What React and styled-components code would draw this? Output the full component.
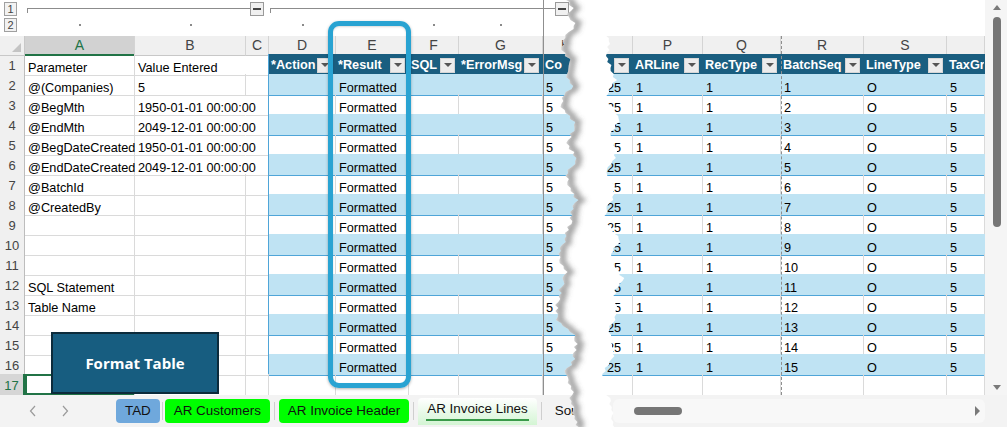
import React from 'react';
import styled, { createGlobalStyle, css } from 'styled-components';

const COLS = '25px 110px 111px 23px 67px 73px 50px 84px 47px 43px 70px 78px 83px 83px 38px';
const HEAD_BG = '#1a5e80';
const BAND = '#bfe3f3';
const LINE = '#4fa5d8';
const GRID = '#dadada';
const GREEN = '#217346';

const GlobalStyle = createGlobalStyle`
  html, body { margin: 0; padding: 0; background: #fff; }
  body { font-family: "Liberation Sans", Arial, sans-serif; overflow: hidden; }
  * { box-sizing: border-box; }
`;

const Screen = styled.div`
  position: relative;
  width: 1007px;
  height: 427px;
  overflow: hidden;
  display: grid;
  grid-template-columns: 985px 22px;
  grid-template-rows: 395px 32px;
  background: #fff;
`;

const Sheet = styled.div`
  overflow: hidden;
  display: flex;
  flex-direction: column;
`;

const Outline = styled.div`
  display: grid;
  grid-template-columns: ${COLS};
  grid-template-rows: 18px 18px;
  height: 36px;
`;

const LevelStack = styled.div`
  grid-row: 1 / span 2;
  grid-column: 1;
  display: flex;
  flex-direction: column;
  gap: 2px;
  padding: 2px 0 0 4px;
`;

const LevelButton = styled.div`
  width: 13px;
  height: 14px;
  border: 1px solid #a0a0a0;
  background: #f2f2f2;
  color: #444;
  font-size: 11px;
  line-height: 12px;
  text-align: center;
`;

const Bracket = styled.div`
  grid-row: 1;
  grid-column: ${p => p.$cols};
  align-self: start;
  margin-top: 8px;
  height: 5px;
  border-top: 1px solid #8c8c8c;
  border-left: 1px solid #8c8c8c;
  margin-left: ${p => p.$ml}px;
  margin-right: ${p => p.$mr}px;
`;

const MinusBox = styled.div`
  grid-row: 1;
  grid-column: ${p => p.$col};
  align-self: start;
  justify-self: start;
  margin-top: 2px;
  margin-left: ${p => p.$ml}px;
  width: 14px;
  height: 14px;
  border: 1px solid #9a9a9a;
  background: #f0f0f0;
  display: flex;
  align-items: center;
  justify-content: center;
  &::after {
    content: '';
    width: 8px;
    height: 2px;
    background: #444;
  }
`;

const Dot = styled.div`
  grid-row: 2;
  grid-column: ${p => p.$col};
  justify-self: center;
  margin-top: 6px;
  width: 2px;
  height: 2px;
  background: #8a8a8a;
`;

const GridRow = styled.div`
  display: grid;
  grid-template-columns: ${COLS};
  height: ${p => p.$h || 20}px;
  flex: none;
`;

const Corner = styled.div`
  position: relative;
  background: #f0f0f0;
  border-right: 1px solid #c8c8c8;
  border-bottom: 1px solid #c8c8c8;
  &::after {
    content: '';
    position: absolute;
    right: 3px;
    bottom: 3px;
    border-left: 9px solid transparent;
    border-bottom: 9px solid #c4c4c4;
  }
`;

const ColHead = styled.div`
  background: #f0f0f0;
  color: #444;
  font-size: 14px;
  line-height: 18px;
  text-align: center;
  border-right: 1px solid #d4d4d4;
  border-bottom: 1px solid #c8c8c8;
  ${p => p.$selected && css`
    background: #d2d2d2;
    color: ${GREEN};
    border-bottom: 2px solid ${GREEN};
  `}
`;

const RowNum = styled.div`
  background: #f0f0f0;
  color: #444;
  font-size: 13px;
  line-height: 19px;
  padding-top: 2px;
  text-align: center;
  border-right: 1px solid #bdbdbd;
  border-bottom: 1px solid #d4d4d4;
  ${p => p.$selected && css`
    background: #d6d6d6;
    color: ${GREEN};
    border-right: 2px solid ${GREEN};
  `}
`;

const Cell = styled.div`
  display: flex;
  align-items: flex-end;
  min-width: 0;
  padding: 0 3px 0;
  font-size: 12.7px;
  line-height: 14px;
  color: #000;
  white-space: nowrap;
  border-right: 1px solid ${GRID};
  border-bottom: 1px solid ${GRID};
  ${p => p.$kind === 'band' && css`
    background: ${BAND};
    border-right-color: ${BAND};
    border-bottom-color: ${LINE};
  `}
  ${p => p.$kind === 'white' && css`
    border-bottom-color: ${LINE};
  `}
  ${p => p.$kind === 'head' && css`
    background: ${HEAD_BG};
    color: #fff;
    font-weight: 700;
    border-right-color: ${HEAD_BG};
    border-bottom-color: ${LINE};
    overflow: hidden;
    align-items: center;
    padding: 1px 2px 0 2px;
  `}
  ${p => p.$right && css`
    justify-content: flex-end;
    padding-right: 11px;
  `}
  ${p => p.$spill && css`border-right-color: transparent;`}
  ${p => p.$edge && css`border-right-color: ${LINE};`}
  ${p => p.$selected && css`box-shadow: inset 0 0 0 2px ${GREEN};`}
`;

const FilterBtn = styled.span`
  flex: none;
  margin-left: auto;
  margin-right: 1px;
  width: 15px;
  height: 15px;
  background: #ececec;
  border: 1px solid #d6d6d6;
  display: flex;
  align-items: center;
  justify-content: center;
  &::after {
    content: '';
    border-left: 4px solid transparent;
    border-right: 4px solid transparent;
    border-top: 4px solid #555;
  }
`;

const VScroll = styled.div`
  grid-column: 2;
  grid-row: 1;
  background: #f5f5f5;
  display: flex;
  flex-direction: column;
  align-items: center;
  padding: 5px 0 5px 2px;
`;

const Arrow = styled.div`
  width: 0;
  height: 0;
  ${p => p.$dir === 'up' && css`
    border-left: 4px solid transparent;
    border-right: 4px solid transparent;
    border-bottom: 5px solid #7a7a7a;
  `}
  ${p => p.$dir === 'down' && css`
    margin-top: auto;
    border-left: 4px solid transparent;
    border-right: 4px solid transparent;
    border-top: 5px solid #7a7a7a;
  `}
  ${p => p.$dir === 'right' && css`
    border-top: 5px solid transparent;
    border-bottom: 5px solid transparent;
    border-left: 5px solid #7a7a7a;
  `}
`;

const VThumb = styled.div`
  margin-top: 7px;
  width: 8px;
  height: 210px;
  border-radius: 4px;
  background: #767676;
`;

const TabBar = styled.div`
  grid-column: 1 / -1;
  grid-row: 2;
  background: #f3f3f3;
  display: flex;
  align-items: center;
`;

const Nav = styled.div`
  width: 116px;
  flex: none;
  display: flex;
  align-items: center;
  gap: 24px;
  padding-left: 29px;
  color: #9a9a9a;
`;

const Tab = styled.div`
  flex: none;
  position: relative;
  height: 24px;
  padding: 0 9px;
  border-radius: 4px;
  font-size: 13.4px;
  line-height: 24px;
  color: #111;
  background: ${p => p.$bg || 'transparent'};
  ${p => p.$active && css`
    height: 27px;
    margin-top: 1px;
    line-height: 22px;
    border-radius: 4px 4px 0 0;
    background: linear-gradient(#ffffff, #d4f5d4);
    &::after {
      content: '';
      position: absolute;
      left: 8px;
      right: 8px;
      bottom: 4px;
      height: 2px;
      background: #3a9a4a;
    }
  `}
`;

const Sep = styled.div`
  flex: none;
  width: 1px;
  height: 18px;
  background: #cfcfcf;
  margin: 0 ${p => p.$m}px;
`;

const HScroll = styled.div`
  margin-left: auto;
  margin-right: 22px;
  width: 396px;
  height: 24px;
  border-radius: 6px;
  background: #f8f8f8;
  display: flex;
  align-items: center;
  padding: 0 5px 0 21px;
`;

const HThumb = styled.div`
  width: 48px;
  height: 8px;
  border-radius: 4px;
  background: #767676;
  margin-right: auto;
`;

const Highlight = styled.div`
  position: absolute;
  left: 328px;
  top: 21px;
  width: 83px;
  height: 367px;
  border: 5px solid #29a3d2;
  border-radius: 11px;
  box-shadow: 0 1px 3px rgba(0, 0, 0, 0.3), inset 0 1px 2px rgba(0, 0, 0, 0.15);
  pointer-events: none;
`;

const FormatButton = styled.div`
  position: absolute;
  left: 51px;
  top: 332px;
  width: 168px;
  height: 62px;
  background: #175d80;
  border: 2px solid #0c2b3b;
  color: #fff;
  font-family: "Open Sans", "Liberation Sans", sans-serif;
  font-weight: 700;
  font-size: 15px;
  display: flex;
  align-items: center;
  justify-content: center;
`;

const PageBreak = styled.div`
  position: absolute;
  left: ${p => p.$x}px;
  top: ${p => p.$top}px;
  height: ${p => 395 - p.$top}px;
  width: 0;
  border-left: 1px ${p => (p.$dashed ? 'dashed' : 'solid')} #8f8f8f;
  pointer-events: none;
`;

const TearSvg = styled.svg`
  position: absolute;
  left: 540px;
  top: 0;
  pointer-events: none;
`;

/* ---------- data ---------- */
const LETTERS = ['', 'A', 'B', 'C', 'D', 'E', 'F', 'G', 'H', '', 'P', 'Q', 'R', 'S', ''];
const LEFT = [
  ['Parameter', 'Value Entered'],
  ['@(Companies)', '5'],
  ['@BegMth', '1950-01-01 00:00:00'],
  ['@EndMth', '2049-12-01 00:00:00'],
  ['@BegDateCreated', '1950-01-01 00:00:00'],
  ['@EndDateCreated', '2049-12-01 00:00:00'],
  ['@BatchId', ''],
  ['@CreatedBy', ''],
  ['', ''],
  ['', ''],
  ['', ''],
  ['SQL Statement', ''],
  ['Table Name', ''],
  ['', ''],
  ['', ''],
  ['', ''],
  ['', ''],
];
const HEADS = [
  ['*Action', true], ['*Result', true], ['SQL', true], ['*ErrorMsg', true], ['Co', true],
  ['', true], ['ARLine', true], ['RecType', true], ['BatchSeq', true], ['LineType', true], ['TaxGroup', false],
];

/* ---------- torn edge drawing ---------- */
const L_KEYS = [[0,566],[8,572],[16,568],[24,575],[32,569],[40,563],[48,562],[56,567],[64,572],[72,565],[80,569],[88,572],[96,563],[104,561],[112,566],[120,572],[128,576],[136,570],[144,568],[152,573],[160,576],[168,570],[176,566],[184,569],[192,572],[200,576],[208,573],[216,570],[224,571],[232,566],[240,564],[248,561],[256,558],[264,562],[272,566],[280,564],[288,560],[296,559],[304,557],[312,556],[320,558],[328,566],[336,574],[344,577],[352,574],[360,575],[368,568],[376,565],[384,570],[392,572],[400,571],[408,573],[416,575],[428,578]];
const R_KEYS = [[0,612],[10,606],[20,610],[30,604],[40,610],[54,607],[60,608],[70,612],[80,616],[90,608],[100,605],[110,615],[120,620],[130,612],[140,610],[150,617],[160,614],[170,605],[180,611],[190,615],[200,612],[210,606],[220,603],[230,612],[240,620],[250,614],[260,609],[270,618],[280,624],[290,616],[300,613],[310,617],[320,614],[330,609],[340,611],[350,614],[360,612],[370,605],[380,600],[390,603],[400,610],[410,612],[428,614]];

function interp(keys, y) {
  for (let i = 0; i < keys.length - 1; i++) {
    const [y0, x0] = keys[i];
    const [y1, x1] = keys[i + 1];
    if (y >= y0 && y <= y1) return x0 + ((x1 - x0) * (y - y0)) / (y1 - y0);
  }
  return keys[keys.length - 1][1];
}
const noise = (i, s) => ((((i + s) * 2654435761) >>> 0) % 1000) / 1000 - 0.5;
function edge(keys, seed, amp) {
  const pts = [];
  let i = 0;
  for (let y = -1; y <= 428; y += 3, i++) {
    pts.push([interp(keys, Math.max(0, y)) + noise(i, seed) * amp - 540, y]);
  }
  return pts;
}
const LP = edge(L_KEYS, 7, 5);
const RP = edge(R_KEYS, 31, 4);
const fmt = pts => pts.map(([x, y]) => `${x.toFixed(1)},${y}`).join(' ');
const POLY = fmt([...LP, ...RP.slice().reverse()]);
const SHADOW = fmt(LP.map(([x, y]) => [x + 3, y]));

function Tear() {
  return (
    <TearSvg width="100" height="427" viewBox="0 0 100 427">
      <defs>
        <clipPath id="tearClip">
          <polygon points={POLY} />
        </clipPath>
        <filter id="tearBlur" x="-50%" y="-5%" width="200%" height="110%">
          <feGaussianBlur stdDeviation="2.4" />
        </filter>
      </defs>
      <polygon points={POLY} fill="#fff" />
      <g clipPath="url(#tearClip)">
        <polyline points={SHADOW} fill="none" stroke="#5a5a5a" strokeOpacity="0.55" strokeWidth="6" filter="url(#tearBlur)" />
      </g>
    </TearSvg>
  );
}

function Chevron({ left }) {
  return (
    <svg width="8" height="12" viewBox="0 0 8 12">
      <polyline
        points={left ? '6,1 1.5,6 6,11' : '2,1 6.5,6 2,11'}
        fill="none"
        stroke="#9a9a9a"
        strokeWidth="1.2"
      />
    </svg>
  );
}

function SheetRow({ r }) {
  const n = r + 1;
  const [a, b] = LEFT[r];
  const inTable = n <= 16;
  const selected = n === 17;
  const spill = b.length > 12;
  const cells = [];

  cells.push(<RowNum key="rn" $selected={selected}>{n}</RowNum>);
  cells.push(<Cell key="a" $selected={selected}>{a}</Cell>);
  cells.push(<Cell key="b" $spill={spill}>{b}</Cell>);
  cells.push(<Cell key="c" $edge={inTable} />);

  if (n === 1) {
    HEADS.forEach(([t, f], i) =>
      cells.push(
        <Cell key={'h' + i} $kind="head">
          {t}
          {f && <FilterBtn />}
        </Cell>
      )
    );
  } else if (inTable) {
    const kind = n % 2 === 0 ? 'band' : 'white';
    const vals = ['', 'Formatted', '', '', '5', '25', '1', '1', String(n - 1), 'O', '5'];
    vals.forEach((v, i) =>
      cells.push(
        <Cell key={'d' + i} $kind={kind} $right={i === 5}>
          {v}
        </Cell>
      )
    );
  } else {
    for (let i = 0; i < 11; i++) cells.push(<Cell key={'e' + i} />);
  }
  return <GridRow>{cells}</GridRow>;
}

export default function App() {
  return (
    <>
      <GlobalStyle />
      <Screen>
        <Sheet>
          <Outline>
            <LevelStack>
              <LevelButton>1</LevelButton>
              <LevelButton>2</LevelButton>
            </LevelStack>
            <Bracket $cols="2 / span 2" $ml={2} $mr={-4} />
            <MinusBox $col={4} $ml={4} />
            <Bracket $cols="5 / span 4" $ml={1} $mr={-12} />
            <MinusBox $col={9} $ml={12} />
            {[2, 3, 5, 6, 7, 8].map(c => (
              <Dot key={c} $col={c} />
            ))}
          </Outline>
          <GridRow $h={18}>
            <Corner />
            {LETTERS.slice(1).map((l, i) => (
              <ColHead key={i} $selected={l === 'A'}>
                {l}
              </ColHead>
            ))}
          </GridRow>
          {LEFT.map((_, r) => (
            <SheetRow key={r} r={r} />
          ))}
        </Sheet>

        <VScroll>
          <Arrow $dir="up" />
          <VThumb />
          <Arrow $dir="down" />
        </VScroll>

        <TabBar>
          <Nav>
            <Chevron left />
            <Chevron />
          </Nav>
          <Tab $bg="#6fa8dc">TAD</Tab>
          <Sep $m={2} />
          <Tab $bg="#00ff00">AR Customers</Tab>
          <Sep $m={4} />
          <Tab $bg="#00ff00">AR Invoice Header</Tab>
          <Sep $m={4} />
          <Tab $active>AR Invoice Lines</Tab>
          <Sep $m={4} />
          <Tab>Sources</Tab>
          <HScroll>
            <HThumb />
            <Arrow $dir="right" />
          </HScroll>
        </TabBar>

        <PageBreak $x={543} $top={0} />
        <PageBreak $x={781} $top={36} $dashed />
        <Highlight />
        <FormatButton>Format Table</FormatButton>
        <Tear />
      </Screen>
    </>
  );
}
